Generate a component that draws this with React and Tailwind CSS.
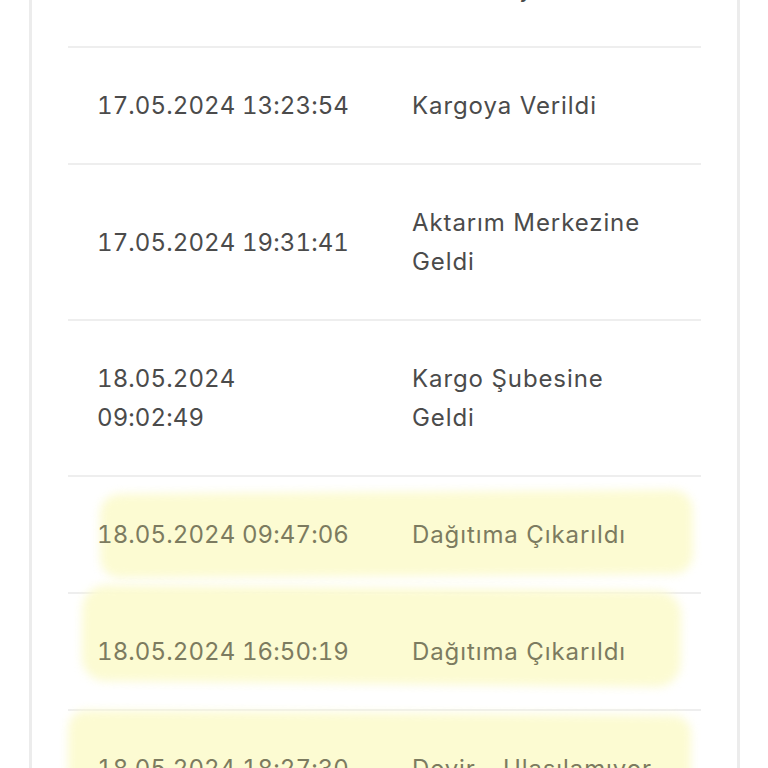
const events = [
  { date: "16.05.2024 21:10:05", status: "Gönderi\nHazırlanıyor" },
  { date: "17.05.2024 13:23:54", status: "Kargoya Verildi" },
  { date: "17.05.2024 19:31:41", status: "Aktarım Merkezine\nGeldi" },
  { date: "18.05.2024\n09:02:49", status: "Kargo Şubesine\nGeldi" },
  { date: "18.05.2024 09:47:06", status: "Dağıtıma Çıkarıldı", mark: 1 },
  { date: "18.05.2024 16:50:19", status: "Dağıtıma Çıkarıldı", mark: 2 },
  { date: "18.05.2024 18:27:30", status: "Devir - Ulaşılamıyor", mark: 3 },
];

// highlighter strokes drawn over the screenshot
const Marker = ({ type }) => {
  if (type === 1)
    return (
      <span className="absolute left-[32px] right-[8px] top-[15px] h-[84px] rounded-[20px] bg-[#fcfbd2] blur-[5px] -rotate-[0.4deg]" />
    );
  if (type === 2)
    return (
      <span className="absolute left-[14px] right-[20px] top-[-6px] h-[96px] rounded-[24px] bg-[#fcfbd2] blur-[5px] rotate-[0.6deg]" />
    );
  return (
    <span className="absolute left-[0px] right-[10px] top-[2px] h-[80px] rounded-[18px] bg-[#fcfbd2] blur-[5px] rotate-[0.5deg]" />
  );
};

const Row = ({ event }) => {
  const marked = Boolean(event.mark);
  return (
    <div className="relative border-t-2 border-[#eeeeee]">
      {marked && <Marker type={event.mark} />}
      <div
        className={`relative flex py-[38px] pl-[29px] text-[24px] leading-[39px] whitespace-pre-line ${
          marked ? "text-[#7c7b60]" : "text-[#4b4b4b]"
        }`}
      >
        <div className="w-[315px] shrink-0 flex items-center tabular-nums tracking-[0.1px]">
          {event.date}
        </div>
        <div className="flex-1 flex items-center tracking-[0.9px]">{event.status}</div>
      </div>
    </div>
  );
};

export default function App() {
  return (
    <div className="h-[768px] w-[768px] overflow-hidden bg-white font-['Inter','Liberation_Sans',sans-serif]">
      <div className="ml-[29px] w-[711px] h-full overflow-hidden border-x-[3px] border-[#ececec]">
        <div className="mx-[36px] -mt-[110px]">
          {events.map((event, i) => (
            <Row key={i} event={event} />
          ))}
        </div>
      </div>
    </div>
  );
}
